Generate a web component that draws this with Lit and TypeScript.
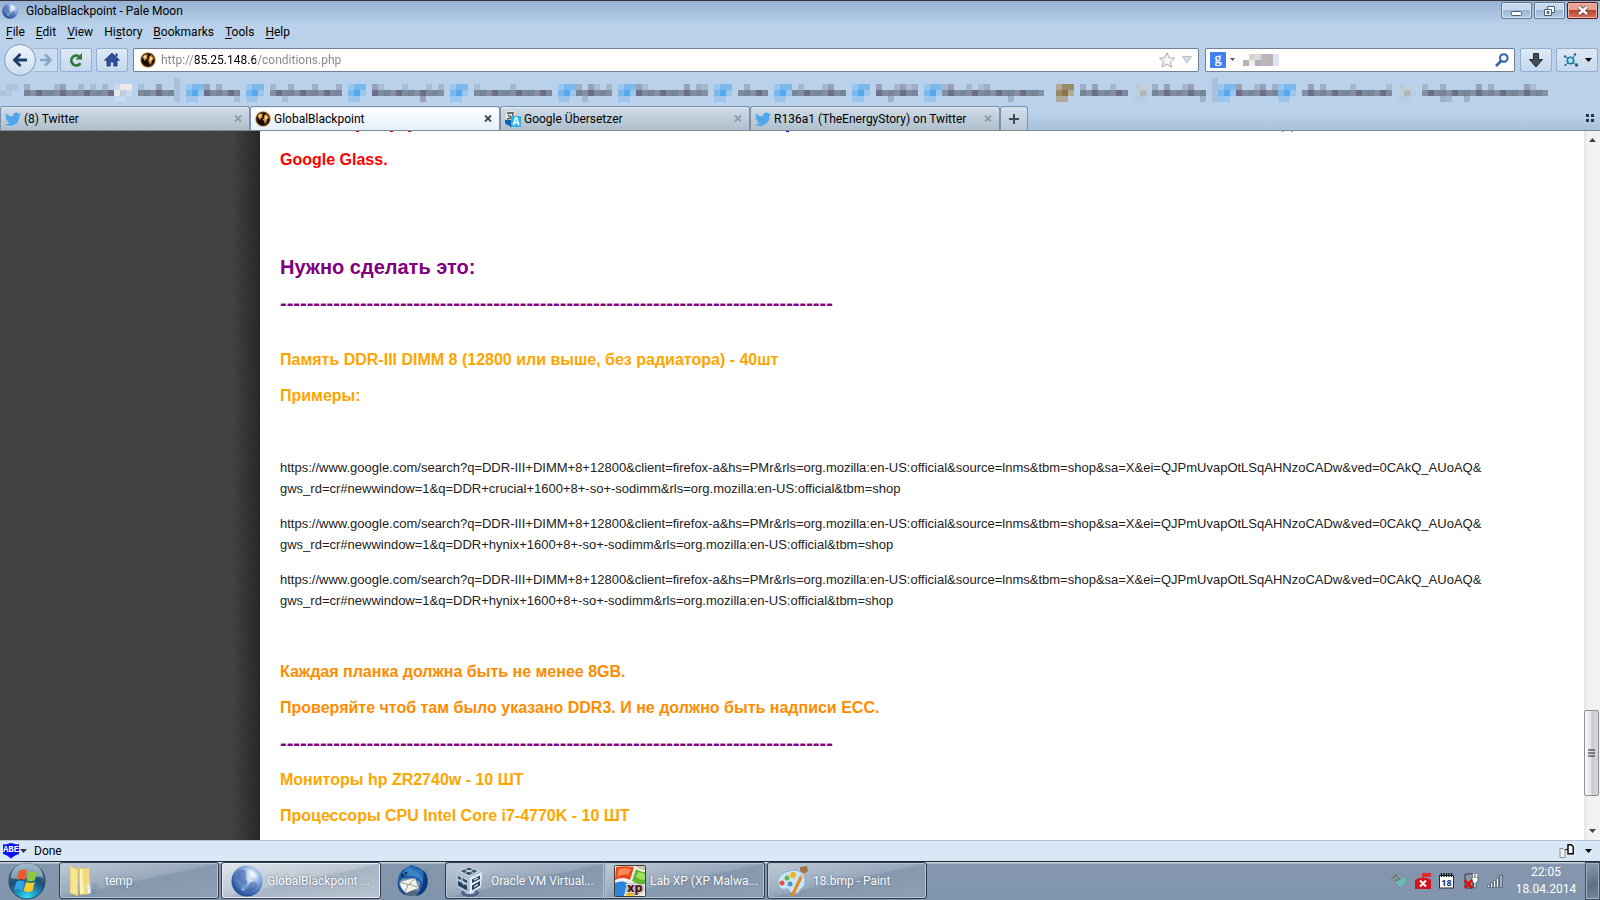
import { LitElement, html, css, svg } from "lit";
import { customElement } from "lit/decorators.js";
import { classMap } from "lit/directives/class-map.js";

/* ---------- icons ---------- */

const bird = svg`<path d="M16 3.2a6.5 6.5 0 0 1-1.9.5A3.3 3.3 0 0 0 15.6 1.900a6.600 6.600 0 0 1-2.100.8A3.300 3.300 0 0 0 7.900 5.700 9.300 9.300 0 0 1 1.100 2.300a3.300 3.300 0 0 0 1 4.400 3.300 3.300 0 0 1-1.500-.4c0 1.600 1.100 3 2.600 3.300a3.300 3.300 0 0 1-1.500 0 3.300 3.300 0 0 0 3.100 2.300A6.600 6.600 0 0 1 0 13.300 9.300 9.300 0 0 0 14.400 5c.6-.5 1.200-1.100 1.600-1.800z" fill="#4da7ea"/>`;

const twitter = html`<svg width="16" height="16" viewBox="0 0 16 16" aria-hidden="true">${bird}</svg>`;

const darkGlobe = html`<svg width="16" height="16" viewBox="0 0 16 16" aria-hidden="true">
  <defs><radialGradient id="dg"><stop offset=".7" stop-color="#120b08"/><stop offset=".86" stop-color="#7d4a18"/><stop offset="1" stop-color="#e8bb7a" stop-opacity=".5"/></radialGradient></defs>
  <circle cx="8" cy="8" r="8" fill="url(#dg)"/>
  <path d="M2.500 5l2.500-2.500 3 .5-1 2 1 1.500-2 .5-1 2-1.500-2z" fill="#e09a3c"/>
  <path d="M3.500 5l1.500-1.500 1.500.6-1.500 1.900z" fill="#fff0bd"/>
  <path d="M9 4.500l2.500-1.500 1.500 2 1 2-2 1.500-.5 2.500-1.500 2-1-3-1.500-1.500 1.500-1.500z" fill="#d98b34"/>
  <path d="M10 5.500l2-.5 0 2-1.500 2.500-.5-2z" fill="#ffe7a8"/>
</svg>`;

const moon = (size: number) => html`<svg width=${size} height=${size} viewBox="0 0 32 32" aria-hidden="true">
  <defs><radialGradient id="mn" cx=".64" cy=".3" r=".78"><stop offset="0" stop-color="#eaf3fd"/><stop offset=".35" stop-color="#9bbbe6"/><stop offset=".7" stop-color="#4a74b8"/><stop offset="1" stop-color="#1a3a7e"/></radialGradient></defs>
  <circle cx="16" cy="16" r="15.500" fill="url(#mn)"/>
  <path d="M6 8c3-4 8-4 9-1s-1 5 1 8-2 6-5 4-2-4-4-5-2-4-1-6z" fill="#2d539b" opacity=".45"/>
  <path d="M20 17c3-1 6 0 6 3s-4 7-8 7-2-3-1-5 1-4 3-5z" fill="#24488e" opacity=".35"/>
  <path d="M18 5c4 0 7 3 8 6s-3 3-5 1-5-6-3-7z" fill="#fff" opacity=".5"/>
  <path d="M15 14l3-2 1 3 3 0-2 2-3 2z" fill="#fff" opacity=".35"/>
  <circle cx="12" cy="24" r="2" fill="#b5cdf0" opacity=".5"/>
</svg>`;

const translate = html`<svg width="16" height="16" viewBox="0 0 16 16" aria-hidden="true">
  <rect x="1" y="0" width="9" height="9" rx="1" fill="#e9e6d8"/>
  <path d="M2 2h7M5.500 1v1M3 4l5 4M8 3c0 3-3 5-6 5" stroke="#45545a" stroke-width="1.300" fill="none"/>
  <path d="M0 9h7v7h-2l-1-2-2 0-2-2z" fill="#0b63b5"/>
  <rect x="6" y="5" width="10" height="11" rx="1" fill="#2fb1ec"/>
  <text x="11" y="14" text-anchor="middle" font-family="Open Sans, sans-serif" font-size="10" font-weight="700" fill="#fff">A</text>
</svg>`;

const closeGlyph = html`<svg width="8" height="7" viewBox="0 0 8 7" aria-hidden="true"><path d="M1 .5l6 6M7 .5l-6 6" stroke="currentColor" stroke-width="1.800"/></svg>`;

const caret = html`<svg width="7" height="4" viewBox="0 0 7 4" aria-hidden="true"><path d="M0 0h7L3.500 4z" fill="currentColor"/></svg>`;

const backArrow = html`<svg width="16" height="16" viewBox="0 0 16 16" aria-hidden="true"><path d="M8.500 2L2.500 8l6 6M3 8h12" fill="none" stroke="#1d3f66" stroke-width="2.800"/></svg>`;
const fwdArrow = html`<svg width="12" height="14" viewBox="0 0 12 14" aria-hidden="true"><path d="M5 1.500L10.500 7 5 12.500M10 7H0" fill="none" stroke="#84a6cb" stroke-width="2.600"/></svg>`;
const reloadIcon = html`<svg width="16" height="16" viewBox="0 0 16 16" aria-hidden="true"><path d="M12.500 11.200A5 5 0 1 1 11 4.300" fill="none" stroke="#2c7a34" stroke-width="2.600"/><path d="M14 1v6.500H7.500z" fill="#2c7a34"/></svg>`;
const homeIcon = html`<svg width="16" height="16" viewBox="0 0 16 16" aria-hidden="true"><path d="M8 1l7.500 7.200H13V14H9.800v-4H6.200v4H3V8.200H.5z" fill="#2f4f9e" stroke="#1d3470" stroke-width=".8"/><path d="M11.500 1.500h2v3h-2z" fill="#1d3470"/></svg>`;

const googleG = html`<svg width="16" height="16" viewBox="0 0 16 16" role="img" aria-label="Google"><rect width="16" height="16" rx="1" fill="#3f7fee"/><text x="8" y="11" text-anchor="middle" font-family="Liberation Serif, serif" font-size="14" fill="#fff" stroke="#fff" stroke-width=".3">g</text></svg>`;

const abe = html`<svg width="16" height="16" viewBox="0 0 16 16" role="img" aria-label="ABE"><path d="M0 1l2 .5 6-1.500 6 1.500 2-.5v10l-4 1.500-4 3-4-3-4-1.500z" fill="#0a12f0"/><text x="8" y="9" text-anchor="middle" font-family="Liberation Mono, monospace" font-size="9" font-weight="700" fill="#fff">ABE</text></svg>`;

const folder = html`<svg width="32" height="32" viewBox="0 0 32 32" aria-hidden="true">
  <path d="M20 28l6 1 4-8-6-4z" fill="#5b6677" opacity=".2"/>
  <path d="M9 3l11 0v26l-9 1z" fill="#e8cb66"/><path d="M11 4l7 0v24l-7 1z" fill="#fff3b8"/>
  <path d="M13 4l7-1 1 17v9l-6 0z" fill="#f2da83"/>
  <path d="M1 1l8 3v27l-8-3z" fill="#f7e596" stroke="#d5b750" stroke-width=".7"/>
  <path d="M18 20h3l1 8h-3z" fill="#e2f1f4"/>
</svg>`;

const thunderbird = html`<svg width="32" height="32" viewBox="0 0 32 32" aria-hidden="true">
  <ellipse cx="15" cy="28" rx="10" ry="3" fill="#3c4a5c" opacity=".6"/>
  <path d="M9 3c2-2 4-1 5-3 2 1 7 1 11 5 6 5 7 14 4 19-2 4-6 6-10 7l3-6 1-8-9-4-9 1-4 6C0 12 3 6 9 3z" fill="#1c5da6"/>
  <path d="M9 4c6-3 14-1 17 4s3 9 1 12c-3-6-8-9-13-9-4 0-6-1-8-3 1-1 2-3 3-4z" fill="#3983c4"/>
  <path d="M26 5c5 4 6 12 3 18s-7 7-10 8c4-4 7-9 7-14s1-8 0-12z" fill="#0d377e"/>
  <path d="M15 4c5 0 9 4 10 9M18 3c5 1 8 5 9 10" stroke="#1a5298" fill="none"/>
  <path d="M3 17l15-4 3 10-12 5-5-5z" fill="#f2f1ec"/><path d="M3 17l9 3 6-7M8 27l3-7M20 22l-8-3" fill="none" stroke="#8f8f8a" stroke-width=".9"/>
  <path d="M1 16c-1 6 1 10 5 13l4 1c-4-4-7-8-9-14z" fill="#184d93"/>
  <circle cx="9" cy="8" r="1.200" fill="#0a1c3c"/><path d="M4 9l4 1-4 3z" fill="#1a2b4a"/>
</svg>`;

const vbox = html`<svg width="28" height="32" viewBox="0 0 28 32" aria-hidden="true">
  <ellipse cx="15" cy="28" rx="9" ry="4" fill="#51638a"/><ellipse cx="15" cy="27" rx="5" ry="2" fill="#b5c3da"/>
  <path d="M14 1l12 5-12 6L2 6z" fill="#c6d3e0"/><path d="M14 2.500l8.500 3.500-8.500 4.300L5.500 6z" fill="#3c556f"/><path d="M10 4.500l8 3M18 4.500l-8 3" stroke="#dbe6ef" stroke-width="1"/>
  <path d="M1 7l12.500 6v16L2 22z" fill="#b5c5d8"/><path d="M3 11l9 4.500v2.500l-9-4.500zM3 16l9 4.500v5l-9-5z" fill="#24405f"/><path d="M6 12l3 8" stroke="#b5c5d8" stroke-width="1.500"/>
  <path d="M27 7l-12.500 6v16l11.500-7z" fill="#e4ecf5"/><path d="M17 14.500l8-4v3.500l-8 4zM17 20.500l8-4.500v4.500l-8 5z" fill="#24405f"/><path d="M19 15l4-2M19 22l4-2.500" stroke="#e4ecf5" stroke-width="1.200"/>
</svg>`;

const xp = html`<svg width="32" height="32" viewBox="0 0 32 32" role="img" aria-label="XP">
  <rect x=".5" y=".5" width="31" height="31" rx="1" fill="#f4f2ea" stroke="#3d3d36"/>
  <path d="M22 1h9v4c-3 0-6-1-9-3z" fill="#c9c4ae"/>
  <path d="M2 2c6-1 12-1 18 0l-4 13C10 12 6 13 1 15z" fill="#e8491c"/><path d="M5 4c4-1 8-1 12 0l-3 6c-4-1-8 0-11 2z" fill="#ff8a52"/>
  <path d="M22 4c3 2 6 3 9 3v12c-5 1-9-1-13-3z" fill="#63b92b"/><path d="M24 7l7 2v6c-4 0-6-1-9-3z" fill="#9ce25c"/>
  <path d="M1 18c5-2 9-2 12 0l-3 13H1z" fill="#2b84dc"/><path d="M15 19l9 3-2 9h-10z" fill="#f9c72c"/>
  <text x="13" y="27" font-family="Open Sans, sans-serif" font-size="13" font-weight="700" fill="#5a0d0d" stroke="#fff" stroke-width="2" paint-order="stroke">xp</text>
</svg>`;

const paint = html`<svg width="32" height="32" viewBox="0 0 32 32" aria-hidden="true">
  <path d="M12 6C22 3 29 9 28 17s-4 5-5 8-4 5-8 3-2-5-6-4-8-1-8-7S5 8 12 6z" fill="#c9e4f5" stroke="#8bb5d3"/>
  <circle cx="16" cy="10" r="3" fill="#f4b41f"/><circle cx="10" cy="13" r="2.500" fill="#66b843"/><circle cx="5" cy="18" r="2.500" fill="#e25241"/><circle cx="13" cy="19" r="2.500" fill="#4b95c5"/>
  <path d="M27 6L15 31" stroke="#e98a1c" stroke-width="3"/><path d="M23 2l7-1 1 5-4 3-4-3z" fill="#a3754a"/><path d="M26 8l-2 4" stroke="#c8ccd0" stroke-width="3"/>
</svg>`;

const orb = html`<svg width="38" height="38" viewBox="0 0 38 38" aria-hidden="true">
  <defs><radialGradient id="orb" cx=".5" cy="1" r="1"><stop offset="0" stop-color="#3fe6ff"/><stop offset=".3" stop-color="#1d96c4"/><stop offset=".6" stop-color="#1d4d74"/><stop offset="1" stop-color="#7797ae"/></radialGradient></defs>
  <circle cx="19" cy="19" r="18" fill="url(#orb)" stroke="#27425a" stroke-width="1"/>
  <path d="M3 16A16 16 0 0 1 35 16C26 12 12 20 3 16z" fill="#dceaf3" opacity=".45"/>
  <path d="M11 9c3-2 6-2 8-.5L17 18c-2-1.500-5-1.500-8 0z" fill="#ee5a24"/>
  <path d="M20.500 9c3 1.500 6 1.500 9-.5L27 18c-3 2-6 1.500-8.500.5z" fill="#8cc63e"/>
  <path d="M8.500 19.500c3-1.500 6-1.500 8 0L14.300 28c-2-1.500-5-1.500-8 0z" fill="#35a0e6"/>
  <path d="M18 20c3 1.500 6 1.500 8.800-.2L24.500 29c-3 1.500-6 1.500-8.700-.3z" fill="#fbc928"/>
</svg>`;

/* ---------- pixelated bookmarks strip ---------- */

interface Mark { icon: number; kind: "none" | "tw" | "white" | "amber" | "grey"; from: number; to: number; up: number[]; down?: number[]; }

// positions are counted in mosaic cells
const MARKS: Mark[] = [
  { icon: 0, kind: "none", from: 4, to: 19, up: [4, 9, 10, 13, 15, 17] },
  { icon: 19, kind: "white", from: 23, to: 29, up: [23, 26] },
  { icon: 31, kind: "tw", from: 34, to: 40, up: [34, 36], down: [39] },
  { icon: 41, kind: "tw", from: 45, to: 57, up: [45, 48, 52, 56], down: [47] },
  { icon: 58, kind: "tw", from: 62, to: 74, up: [62, 63, 67, 71, 73], down: [70] },
  { icon: 75, kind: "tw", from: 79, to: 92, up: [79, 85] },
  { icon: 93, kind: "tw", from: 96, to: 102, up: [96, 98, 99, 101], down: [97] },
  { icon: 103, kind: "tw", from: 106, to: 118, up: [106, 107, 114, 116, 117] },
  { icon: 119, kind: "tw", from: 123, to: 128, up: [124] },
  { icon: 129, kind: "tw", from: 132, to: 141, up: [133, 137, 138] },
  { icon: 142, kind: "tw", from: 146, to: 153, up: [146, 149, 150, 151, 152], down: [148] },
  { icon: 154, kind: "tw", from: 157, to: 174, up: [157, 158, 161, 163, 164], down: [168] },
  { icon: 176, kind: "amber", from: 180, to: 188, up: [180, 182, 185] },
  { icon: 189, kind: "grey", from: 192, to: 201, up: [192, 194, 197, 198], down: [200] },
  { icon: 203, kind: "tw", from: 206, to: 213, up: [206, 209, 210, 212] },
  { icon: 213, kind: "tw", from: 217, to: 232, up: [218, 220, 225, 231] },
  { icon: 233, kind: "grey", from: 237, to: 258, up: [237, 240, 246, 248, 254, 255], down: [240, 241, 244] },
];
const DARK = ["#758698", "#7f8a9c", "#677184", "#6b6d8f", "#76909c", "#8590a0", "#6c7b90"];
const SOFT = ["#9eafca", "#a3b7cd", "#9a9fb8", "#a8bdd8"];
const KINDS = {
  none: ["#adc3da", "#b3c8dd", "#bad1eb"],
  tw: ["#7cb8ec", "#52a9ef", "#9bc6ee"],
  white: ["#ebe9e6", "#c2cce5", "#c9d9ef"],
  amber: ["#9a8a68", "#8c7440", "#b0ab96"],
  grey: ["#c2cfdc", "#b6b6b6", "#b7ccdf"],
};
const cell = (x: number, y: number, fill: string, w = 1) => svg`<rect x=${x * 6} y=${y * 6} width=${w * 6} height="6" fill=${fill}/>`;

const mosaic = html`<svg width="1560" height="24" viewBox="0 0 1560 24" shape-rendering="crispEdges" aria-hidden="true">
  ${MARKS.map((m) => {
    const [a, b, c] = KINDS[m.kind];
    const out = [cell(m.icon, 1, c), cell(m.icon + 1, 1, a, 2), cell(m.icon, 2, a), cell(m.icon + 1, 2, b), cell(m.icon + 2, 2, c), cell(m.icon, 3, c, 2)];
    for (let x = m.from; x < m.to; x++) out.push(cell(x, 2, DARK[(x * 5 + (x >> 2)) % 7]));
    m.up.forEach((x) => out.push(cell(x, 1, SOFT[x % 4])));
    (m.down ?? []).forEach((x) => out.push(cell(x, 3, SOFT[x % 4])));
    return out;
  })}
  ${[29, 202].map((x) => svg`<rect x=${x * 6} y="0" width="6" height="24" fill="#a8c0da"/>`)}
</svg>`;

/* ---------- data ---------- */

const QUERY = "https://www.google.com/search?q=DDR-III+DIMM+8+12800&client=firefox-a&hs=PMr&rls=org.mozilla:en-US:official&source=lnms&tbm=shop&sa=X&ei=QJPmUvapOtLSqAHNzoCADw&ved=0CAkQ_AUoAQ&";
const tail = (brand: string) => `gws_rd=cr#newwindow=1&q=DDR+${brand}+1600+8+-so+-sodimm&rls=org.mozilla:en-US:official&tbm=shop`;
const DASHES = "-".repeat(83);

const MENUS: [string, string, string][] = [["", "F", "ile"], ["", "E", "dit"], ["", "V", "iew"], ["Hi", "s", "tory"], ["", "B", "ookmarks"], ["", "T", "ools"], ["", "H", "elp"]];

@customElement("app-root")
export class AppRoot extends LitElement {
  static styles = css`
    :host { display: flex; flex-direction: column; height: 100vh; overflow: hidden; font: 12px/16px Roboto, "Open Sans", sans-serif; color: #000; background: #b9d1ea; }
    * { box-sizing: border-box; }
    svg { display: block; flex: none; }
    button, input { font: inherit; color: inherit; margin: 0; padding: 0; border: 0; background: none; outline: 0; }
    button { display: flex; align-items: center; justify-content: center; flex: none; }
    h1, h2, p { margin: 0; }

    .chrome { flex: none; background: linear-gradient(#97b2d2, #b9d1ea 24px, #b9d1ea 112px, #a9c0da); border-top: 1px solid #35353b; }
    .title { display: flex; align-items: center; height: 20px; padding-left: 2px; gap: 8px; }
    .title h1 { font: inherit; flex: 1; }
    .wins { display: flex; gap: 2px; padding-right: 2px; align-self: flex-start; padding-top: 1px; }
    .win { width: 31px; height: 17px; border: 1px solid #5e7695; border-radius: 2px; background: linear-gradient(#c5d8ec 45%, #9cb6d3 50%, #b4cbe4); box-shadow: inset 0 0 0 1px #dbe8f5; }
    .win.close { border-color: #571420; background: linear-gradient(#e6a392 45%, #b9432b 50%, #d3755b); box-shadow: inset 0 0 0 1px #eebcae; }
    .menu { display: flex; height: 22px; align-items: center; padding-left: 1px; }
    .menu button { padding: 0 6px 0 5px; display: block; }
    .menu u { text-underline-offset: 2px; }

    .nav { display: flex; align-items: center; height: 35px; padding: 0 2px 1px 4px; }
    .back { width: 32px; height: 32px; border: 1px solid #7f9dbd; border-radius: 50%; background: linear-gradient(#f1f6fb, #cbdcef); z-index: 1; }
    .fwd { width: 24px; height: 24px; margin-left: -2px; border: 1px solid #9db8d6; border-left: 0; background: #c9dcf0; }
    .tool { width: 32px; height: 24px; border: 1px solid #92afcf; border-radius: 2px; background: linear-gradient(#dfe9f5, #c5d8ed); }
    .reload { margin-left: 2px; }
    .home { margin: 0 5px 0 4px; }
    .field { display: flex; align-items: center; height: 24px; border: 1px solid #6f8196; border-radius: 2px; background: #fff; min-width: 0; }
    .url { flex: 1; padding: 0 6px; }
    .url input { flex: 1; min-width: 0; height: 20px; margin-left: 5px; color: #808080; background: linear-gradient(90deg, #858585 34px, #000 34px, #000 95px, #858585 95px); -webkit-background-clip: text; background-clip: text; -webkit-text-fill-color: transparent; }
    .star { margin-right: 7px; }
    .search { width: 310px; margin: 0 5px 0 6px; padding: 0 5px 0 4px; color: #555; }
    .search input { flex: 1; min-width: 0; height: 20px; }
    .search .hint { margin: 0 8px 0 4px; }
    .menuBtn { width: 42px; margin-left: 4px; gap: 6px; }

    .marks { height: 28px; overflow: hidden; }
    .tabs { display: flex; height: 25px; align-items: stretch; border-bottom: 1px solid #7b8b9c; padding-right: 5px; }
    .tab { display: flex; align-items: center; flex: 0 1 250px; padding: 0 6px 0 4px; gap: 3px; border: 1px solid #7b90a8; border-bottom: 0; border-radius: 3px 3px 0 0; background: linear-gradient(#cfdcea, #b0bfcc); box-shadow: inset 0 1px #e3ecf5; color: #000; }
    .tab.on { background: linear-gradient(#fff, #e6f0fb); }
    .tab span { flex: 1; }
    .tab button { color: #8e9aa6; width: 10px; height: 14px; }
    .tab.on button { color: #444; }
    .plus { width: 28px; border: 1px solid #7b90a8; border-bottom: 0; border-radius: 3px 3px 0 0; background: linear-gradient(#d3e0ed, #b6c6d5); }
    .all { margin-left: auto; }

    .view { flex: 1; min-height: 0; display: flex; background: #fff; }
    .side { width: 260px; flex: none; background: linear-gradient(90deg, transparent 232px, rgba(0, 0, 0, 0.4)), repeating-linear-gradient(45deg, #404040 0 2px, #454545 2px 3px); }
    .page { flex: 1; min-width: 0; overflow: hidden; padding: 0 100px 0 20px; font: 13px/21px "Liberation Sans", Arial, sans-serif; color: #222; }
    .page p, .page h2 { margin-bottom: 15px; }
    .page h2 { font-size: 20px; line-height: 21px; color: purple; }
    .page .rule { font-size: 20px; font-weight: 700; color: purple; white-space: nowrap; }
    .page .bold { font-size: 16px; font-weight: 700; }
    .page .red { color: #f00; }
    .page .orange { color: orange; }
    .page .deep { color: #ff8c00; }
    .page .gap { height: 21px; }
    .page .half { height: 20px; }
    .page .links p { margin-bottom: 14px; }
    .edge { margin: 0 0 17px; }
    .scroll { width: 16px; flex: none; display: flex; flex-direction: column; align-items: center; background: linear-gradient(90deg, #e4e4e4, #f2f2f2 4px); color: #444; padding: 7px 0; }
    .scroll .track { flex: 1; width: 100%; display: flex; flex-direction: column; }
    .before { flex: 566; }
    .after { flex: 33; }
    .thumb { width: 15px; flex: 83; border: 1px solid #8d8d93; border-radius: 2px; background: linear-gradient(90deg, #fafafa, #e2e2e5 45%, #c8c8cd 55%, #d9d9dc); display: grid; place-items: center; }

    .status { flex: none; height: 21px; display: flex; align-items: center; padding: 0 8px 0 3px; border-top: 1px solid #b4c4d6; background: #d9e8f7; color: #000; }
    .status .done { margin-left: 7px; flex: 1; }
    .status .abe { gap: 1px; color: #333; }
    .status .pages { margin-right: 11px; }

    .task { flex: none; height: 39px; display: flex; align-items: stretch; background: linear-gradient(#c9d4df 1px, #8396ae 2px, #8195ad); border-top: 1px solid #1f2a36; color: #fff; }
    .start { width: 54px; }
    .item { flex: 0 1 160px; min-width: 0; margin-bottom: 1px; justify-content: flex-start; gap: 4px; padding: 0 4px 0 9px; border: 1px solid #2f3d4e; border-radius: 3px; box-shadow: inset 0 0 0 1px #b7c3d1; background: linear-gradient(168deg, #bfcad7, #98a8bb 48%, #8698ae 52%, #8e9fb4); text-shadow: 0 0 2px #4b5b70; }
    .item span { white-space: nowrap; }
    .item.on { background: linear-gradient(168deg, #dfe5eb, #bcc7d3 48%, #a6b4c4 52%, #b9c4d1); box-shadow: inset 0 0 0 1px #e9eef3; }
    .items { flex: 1; min-width: 0; display: flex; gap: 2px; padding-left: 5px; }
    .bird { flex: 0 0 60px; }
    .pair { display: flex; flex: 0 1 320px; min-width: 0; }
    .pair .item:first-child { gap: 8px; border-right-color: #8293a8; border-radius: 3px 0 0 3px; }
    .pair .item:last-child { border-left: 0; border-radius: 0 3px 3px 0; }
    .tray { display: flex; align-items: center; gap: 8px; margin-right: 4px; }
    .clock { width: 78px; text-align: center; line-height: 17px; padding-top: 2px; }
    .desk { width: 15px; border: 1px solid #3f4e60; box-shadow: inset 0 0 0 1px #a2b0c0; background: linear-gradient(165deg, #8b9bae, #5d7088 60%, #74869c); }
  `;

  private tab(icon: unknown, label: string, on = false) {
    return html`<div class=${classMap({ tab: true, on })} role="tab" aria-selected=${on}>${icon}<span>${label}</span><button aria-label="Close ${label}">${closeGlyph}</button></div>`;
  }

  private item(icon: unknown, label: string, on = false) {
    return html`<button class=${classMap({ item: true, on })}>${icon}<span>${label}</span></button>`;
  }

  render() {
    return html`
      <header class="chrome">
        <div class="title">
          ${moon(16)}
          <h1>GlobalBlackpoint - Pale Moon</h1>
          <div class="wins">
            <button class="win" aria-label="Minimize"><svg width="11" height="13" viewBox="0 0 11 13"><rect x=".5" y="7.500" width="10" height="4" rx="1" fill="#fff" stroke="#4a5d75"/></svg></button>
            <button class="win" aria-label="Restore"><svg width="13" height="12" viewBox="0 0 13 12"><g fill="#fff" stroke="#4a5d75"><path d="M4.500 1.500h7v6h-7z"/><path d="M1.500 4.500h7v6h-7z"/><path d="M4 6.500h2v2H4z" fill="#a8bfd8"/></g></svg></button>
            <button class="win close" aria-label="Close"><svg width="12" height="11" viewBox="0 0 12 11"><path d="M2 2l8 7M10 2L2 9" stroke="#4f3a44" stroke-width="4.200"/><path d="M2 2l8 7M10 2L2 9" stroke="#fff" stroke-width="2.600"/></svg></button>
          </div>
        </div>
        <nav class="menu">${MENUS.map(([a, b, c]) => html`<button>${a}<u>${b}</u>${c}</button>`)}</nav>
        <div class="nav">
          <button class="back" aria-label="Back">${backArrow}</button>
          <button class="fwd" aria-label="Forward">${fwdArrow}</button>
          <button class="tool reload" aria-label="Reload">${reloadIcon}</button>
          <button class="tool home" aria-label="Home">${homeIcon}</button>
          <div class="field url">
            ${darkGlobe}
            <input aria-label="Address" value="http://85.25.148.6/conditions.php" />
            <svg class="star" width="16" height="16" viewBox="0 0 16 16" aria-hidden="true"><path d="M8 .8l2.200 4.900 5.300.5-4 3.600 1.200 5.300L8 12.300l-4.700 2.800 1.200-5.300-4-3.600 5.300-.5z" fill="#f6f6f6" stroke="#a8a8a8"/></svg>
            <svg width="10" height="8" viewBox="0 0 10 8" aria-hidden="true"><path d="M.5.5h9L5 7z" fill="#d5dde0" stroke="#b5bfc4"/></svg>
          </div>
          <div class="field search">
            ${googleG}<svg width="13" height="4" viewBox="0 0 13 4" aria-hidden="true"><path d="M4 0h5L6.500 3z" fill="#555"/></svg>
            <svg class="hint" width="36" height="12" viewBox="0 0 36 12" shape-rendering="crispEdges" aria-hidden="true">
              <path d="M0 6h6v6H0z" fill="#b8b2ae"/><path d="M6 0h6v6H6z" fill="#d6d2ca"/><path d="M6 6h6v6H6z" fill="#ededee"/><path d="M12 0h6v6h-6z" fill="#d6dbe8"/><path d="M12 6h6v6h-6z" fill="#aeafb8"/><path d="M18 0h6v12h-6z" fill="#c0b8b2"/><path d="M24 0h6v12h-6z" fill="#b6b4b4"/><path d="M30 0h6v12h-6z" fill="#dfe2f1"/>
            </svg>
            <input aria-label="Search" />
            <svg width="14" height="14" viewBox="0 0 14 14" aria-hidden="true"><circle cx="8.800" cy="5" r="3.800" fill="#eef5fc" stroke="#2e63a4" stroke-width="2"/><path d="M6 8L1 13" stroke="#2e63a4" stroke-width="2.600"/></svg>
          </div>
          <button class="tool" aria-label="Downloads"><svg width="14" height="15" viewBox="0 0 14 15"><path d="M4.500.5h5v6h4L7 14 .5 6.500h4z" fill="#414b54" stroke="#252c33"/></svg></button>
          <button class="tool menuBtn" aria-label="Add-on menu"><svg width="16" height="14" viewBox="0 0 16 14"><circle cx="7.500" cy="7.500" r="3.200" fill="#b9e2f0" stroke="#1f7f9f" stroke-width="1.600"/><path d="M5 5L3 4M10 5l1.500-2.500M10 10l3 1.500M5 10l-2 1.500" stroke="#1f7f9f"/><g fill="#176a8b"><circle cx="2" cy="3.500" r="1.200"/><circle cx="12" cy="1.500" r="1.200"/><circle cx="13.500" cy="12" r="1.700"/><circle cx="2.500" cy="12" r="1.100"/></g></svg>${caret}</button>
        </div>
        <div class="marks">${mosaic}</div>
        <div class="tabs" role="tablist">
          ${this.tab(twitter, "(8) Twitter")}
          ${this.tab(darkGlobe, "GlobalBlackpoint", true)}
          ${this.tab(translate, "Google Übersetzer")}
          ${this.tab(twitter, "R136a1 (TheEnergyStory) on Twitter")}
          <button class="plus" aria-label="New tab"><svg width="10" height="10" viewBox="0 0 10 10"><path d="M5 0v10M0 5h10" stroke="#3f4a56" stroke-width="2"/></svg></button>
          <button class="all" aria-label="List all tabs"><svg width="9" height="8" viewBox="0 0 9 8"><path d="M0 0h3v3H0zM5 0h3v3H5zM0 5h3v3H0zM5 5h3v3H5z" fill="#2b3440"/></svg></button>
        </div>
      </header>

      <div class="view">
        <div class="side"></div>
        <main class="page">
          <svg class="edge" width="1040" height="1" viewBox="0 0 1040 1" shape-rendering="crispEdges" aria-hidden="true">
            <path d="M76 0h3v1h-3zM110 0h3v1h-3zM128 0h3v1h-3z" fill="red"/><path d="M506 0h3v1h-3z" fill="blue"/><path d="M1002 0h2v1h-2zM1011 0h2v1h-2z" fill="#c8c"/>
          </svg>
          <p class="bold red">Google Glass.</p>
          <p class="gap"></p>
          <p class="gap"></p>
          <h2>Нужно сделать это:</h2>
          <p class="rule">${DASHES}</p>
          <div class="half"></div>
          <p class="bold orange">Память DDR-III DIMM 8 (12800 или выше, без радиатора) - 40шт</p>
          <p class="bold orange">Примеры:</p>
          <p class="gap"></p>
          <div class="links">
            ${["crucial", "hynix", "hynix"].map((b) => html`<p>${QUERY}<br />${tail(b)}</p>`)}
          </div>
          <p class="gap"></p>
          <p class="bold deep">Каждая планка должна быть не менее 8GB.</p>
          <p class="bold deep">Проверяйте чтоб там было указано DDR3. И не должно быть надписи ECC.</p>
          <p class="rule">${DASHES}</p>
          <p class="bold orange">Мониторы hp ZR2740w - 10 ШТ</p>
          <p class="bold orange">Процессоры CPU Intel Core i7-4770K - 10 ШТ</p>
        </main>
        <div class="scroll" aria-hidden="true">
          <svg width="7" height="4" viewBox="0 0 7 4"><path d="M0 4h7L3.500 0z" fill="#444"/></svg>
          <div class="track"><div class="before"></div><div class="thumb"><svg width="8" height="9" viewBox="0 0 8 9"><path d="M0 1h7M0 4h7M0 7h7" stroke="#5d5d63" stroke-width="1.500"/></svg></div><div class="after"></div></div>
          ${caret}
        </div>
      </div>

      <footer class="status">
        <button class="abe" aria-label="ABE">${abe}${caret}</button>
        <span class="done">Done</span>
        <svg class="pages" width="15" height="14" viewBox="0 0 15 14" aria-hidden="true"><path d="M1 4.500h3l2 2v7H1z" fill="#f2f2f2" stroke="#8d8d8d"/><path d="M9 .8h3.200l2 2v7H9z" fill="#fff" stroke="#000" stroke-width="1.400"/><path d="M6 5.500h3" stroke="#000"/></svg>
        ${caret}
      </footer>

      <footer class="task">
        <button class="start" aria-label="Start">${orb}</button>
        <div class="items">
          ${this.item(folder, "temp")}
          ${this.item(moon(32), "GlobalBlackpoint ...", true)}
          <button class="bird" aria-label="Thunderbird">${thunderbird}</button>
          <div class="pair">${this.item(vbox, "Oracle VM Virtual...")}${this.item(xp, "Lab XP (XP Malwa...")}</div>
          ${this.item(paint, "18.bmp - Paint")}
        </div>
        <div class="tray">
          <svg width="16" height="16" viewBox="0 0 16 16" aria-hidden="true"><path d="M0 5l5-4 5 6-4 4z" fill="#61716f"/><path d="M4 9l3-1 6-4 3 4-6 6z" fill="#65bdb4"/><path d="M1 5l6 5M3 3l6 5M3 7l5-4" stroke="#a4c4bf" stroke-width=".8"/></svg>
          <svg width="16" height="16" viewBox="0 0 16 16" aria-hidden="true"><path d="M7 0h9v4H9v3H7z" fill="#e62a2a"/><path d="M0 7l4-2h8l4 2v9H0z" fill="#d3121b"/><path d="M5 7.500l6 6M11 7.500l-6 6" stroke="#fff" stroke-width="2"/></svg>
          <svg width="16" height="16" viewBox="0 0 16 16" role="img" aria-label="18"><rect x=".5" y="2.500" width="14" height="12.500" fill="#fff" stroke="#2c2c2c"/><path d="M2.500 0v4M5 0v4M7.500 0v4M10 0v4M12.500 0v4" stroke="#111" stroke-width="1.300"/><text x="7.500" y="13" text-anchor="middle" font-family="Open Sans, sans-serif" font-size="9" font-weight="700" fill="#16336e">18</text></svg>
          <svg width="16" height="16" viewBox="0 0 16 16" aria-hidden="true"><rect x="2" y="1" width="8" height="14" rx="1" fill="#8d99a5" stroke="#333"/><path d="M9 4h6v4l-2 2v5h-2v-5L9 8z" fill="#fff" stroke="#333" stroke-width=".7"/><path d="M10.500 1v3M13.500 1v3" stroke="#fff" stroke-width="1.400"/><path d="M2 7l7 8M9 7l-7 8" stroke="#e20a0a" stroke-width="2.600"/></svg>
          <svg width="16" height="14" viewBox="0 0 16 14" aria-hidden="true"><g fill="#fff" stroke="#465568" stroke-width=".7"><path d="M.5 11h2v2.500h-2zM3.500 9h2v4.500h-2zM6.500 6.500h2v7h-2zM9.500 4h2v9.500h-2z"/><path d="M12.500 1h3v12.500h-3z" fill="#a1adba"/></g></svg>
        </div>
        <div class="clock">22:05<br />18.04.2014</div>
        <button class="desk" aria-label="Show desktop"></button>
      </footer>
    `;
  }
}
